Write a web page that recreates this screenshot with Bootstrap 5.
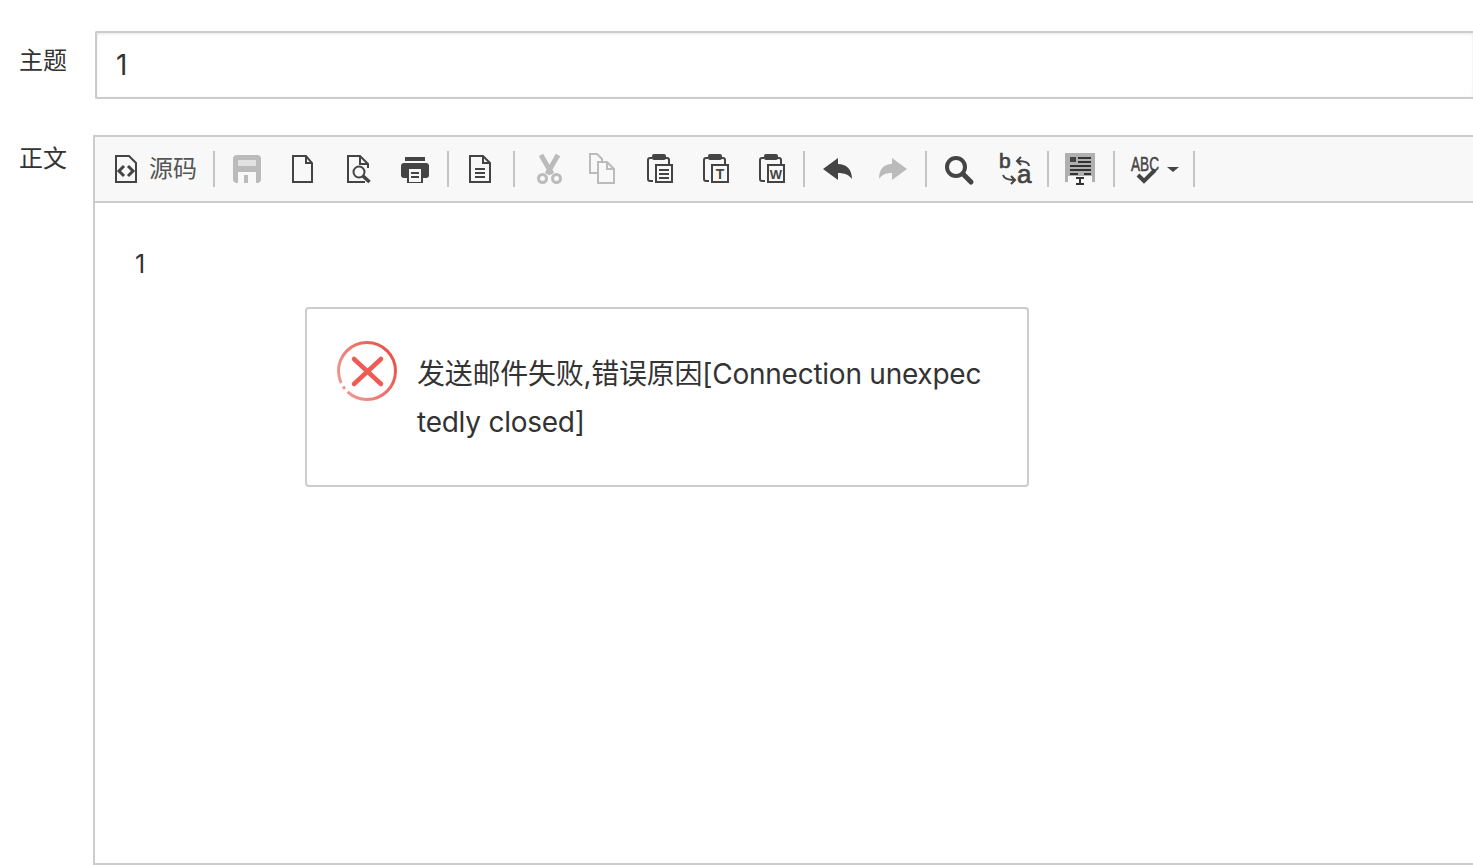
<!DOCTYPE html>
<html lang="zh">
<head>
<meta charset="utf-8">
<title>发送邮件</title>
<link href="https://cdn.jsdelivr.net/npm/bootstrap@5.3.0/dist/css/bootstrap.min.css" rel="stylesheet">
<style>
html,body{height:865px;overflow:hidden;background:#fff}
body{font-family:Inter,"Noto Sans CJK SC",sans-serif;color:#333;padding:31px 0 0 19px;position:relative}
.subj-row{height:68px;margin-bottom:36px}
.field-label{font-size:24px;line-height:34px;color:#333;margin:0;flex:none}
.subj-label{width:76px;padding-top:13px}
.body-label{width:74px;padding-top:7px}
.subj-input.form-control{height:68px;border:2px solid #ccc;border-right:0;border-radius:2px 0 0 2px;box-shadow:inset 0 1px 3px rgba(0,0,0,.1);padding:0 19px;font-size:28px;color:#333;font-family:Inter,sans-serif}
.editor-box{height:730px;border:2px solid #ccc;border-right:0;min-width:0}
.tool-strip{height:66px;background:#f8f8f8;border-bottom:2px solid #ccc;padding-left:2px;flex:none}
.tool-btn{width:56px;height:64px;padding:0;display:flex;align-items:center;justify-content:center;border:0;border-radius:0;flex:none}
.tool-btn svg{width:32px;height:32px;display:block;overflow:visible}
.src-btn{width:112px;padding-left:12px;justify-content:flex-start;color:#555;font-size:24px}
.src-btn span{margin-left:8px;white-space:nowrap;color:#555}
.spell-btn{width:70px;padding-left:10px;justify-content:flex-start}
.drop-caret{width:0;height:0;border-left:6px solid transparent;border-right:6px solid transparent;border-top:5px solid #444;margin-left:6px}
.tool-sep{width:2px;height:36px;background:#c4c4c4;margin:0 4px;flex:none}
.ink{stroke:#444;fill:none;stroke-width:2}
.ink-fill{fill:#444}
.off{stroke:#bbb;fill:none;stroke-width:2}
.off-fill{fill:#bbb}
.ico-text{font-family:"Liberation Sans",sans-serif;fill:#444}
.edit-area{flex:1;padding:42px 40px;font-size:25px;line-height:38px;color:#333;font-family:Inter,sans-serif}
.fail-box{position:absolute;left:305px;top:307px;width:724px;height:180px;background:#fff;border:2px solid #ccc;border-radius:4px;padding:41px 44px 0 110px;font-size:28px;line-height:48px;letter-spacing:-.25px;color:#333;word-break:break-all}
.fail-ico{position:absolute;left:30px;top:32px;width:60px;height:60px;overflow:visible;filter:blur(.3px)}
</style>
</head>
<body>
<div class="d-flex subj-row">
  <label class="field-label subj-label" for="subj">主题</label>
  <input id="subj" class="form-control subj-input" type="text" value="1">
</div>
<div class="d-flex">
  <div class="field-label body-label">正文</div>
  <div class="editor-box flex-grow-1 d-flex flex-column">
    <div class="tool-strip d-flex align-items-center" role="toolbar">
      <button type="button" class="btn tool-btn src-btn">
        <svg viewBox="0 0 32 32"><path class="ink" d="M7 3h13l7 7v19H7z"/><path d="M15 13l-5 5 5 5M19 13l5 5-5 5" stroke="#444" stroke-width="3" fill="none"/></svg>
        <span>源码</span>
      </button>
      <div class="tool-sep"></div>
      <button type="button" class="btn tool-btn"><svg viewBox="0 0 32 32"><rect class="off-fill" x="2" y="2" width="28" height="28" rx="4"/><rect x="7" y="7" width="18" height="6" fill="#e2e2e2"/><path d="M7 19h18v11H7z" fill="#f8f8f8"/><rect class="off-fill" x="13" y="22" width="4" height="8"/></svg></button>
      <button type="button" class="btn tool-btn"><svg viewBox="0 0 32 32"><path class="ink" d="M6 3h13l6 7v19H6zM19 3v7h6"/></svg></button>
      <button type="button" class="btn tool-btn"><svg viewBox="0 0 32 32"><path class="ink" d="M22 29H5V3h12l8 8v4M17 3v8h8"/><circle cx="16" cy="19" r="5.500" fill="#f8f8f8" stroke="#444" stroke-width="2"/><path d="M20 23l6.500 6" stroke="#444" stroke-width="3.500"/></svg></button>
      <button type="button" class="btn tool-btn"><svg viewBox="0 0 32 32"><path class="ink-fill" d="M6 4h20v4H6zM5 10h22a3 3 0 0 1 3 3v9a3 3 0 0 1-3 3h-3v5H8v-5H5a3 3 0 0 1-3-3v-9a3 3 0 0 1 3-3z"/><path d="M10 16h12v13H10z" fill="#f8f8f8"/><path d="M12 20h8M12 24h8" stroke="#444" stroke-width="2"/></svg></button>
      <div class="tool-sep"></div>
      <button type="button" class="btn tool-btn"><svg viewBox="0 0 32 32"><path class="ink" d="M5 3h13l7 7v19H5zM18 3v7h7M10 16h10M10 20h10M10 24h10"/></svg></button>
      <div class="tool-sep"></div>
      <button type="button" class="btn tool-btn"><svg viewBox="0 0 32 32"><path d="M10 2l11 19M27 2L16 21" stroke="#bbb" stroke-width="5" fill="none"/><circle cx="11.500" cy="25.500" r="4" fill="none" stroke="#bbb" stroke-width="3"/><circle cx="25.500" cy="25.500" r="4" fill="none" stroke="#bbb" stroke-width="3"/></svg></button>
      <button type="button" class="btn tool-btn"><svg viewBox="0 0 32 32"><path class="off" d="M10 20H3V1h7l5 5v3M11 9h9l7 7v14H11zM20 9v7h7"/></svg></button>
      <button type="button" class="btn tool-btn"><svg viewBox="0 0 32 32"><path class="ink" d="M9 5H7a2 2 0 0 0-2 2v19a2 2 0 0 0 2 2h3M22 5h2a2 2 0 0 1 2 2v4"/><rect class="ink-fill" x="9" y="1" width="14" height="6" rx="2"/><rect class="ink" x="13" y="12" width="16" height="17"/><path class="ink" d="M16 17h10M16 21h10M16 25h10"/></svg></button>
      <button type="button" class="btn tool-btn"><svg viewBox="0 0 32 32"><path class="ink" d="M9 5H7a2 2 0 0 0-2 2v19a2 2 0 0 0 2 2h3M22 5h2a2 2 0 0 1 2 2v4"/><rect class="ink-fill" x="9" y="1" width="14" height="6" rx="2"/><rect class="ink" x="13" y="12" width="16" height="17"/><text class="ico-text" x="21" y="26" font-size="14" font-weight="700" text-anchor="middle">T</text></svg></button>
      <button type="button" class="btn tool-btn"><svg viewBox="0 0 32 32"><path class="ink" d="M9 5H7a2 2 0 0 0-2 2v19a2 2 0 0 0 2 2h3M22 5h2a2 2 0 0 1 2 2v4"/><rect class="ink-fill" x="9" y="1" width="14" height="6" rx="2"/><rect class="ink" x="13" y="12" width="16" height="17"/><text class="ico-text" x="21" y="26" font-size="13" font-weight="700" text-anchor="middle">W</text></svg></button>
      <div class="tool-sep"></div>
      <button type="button" class="btn tool-btn"><svg viewBox="0 0 32 32"><path class="ink-fill" d="M2 16L17 5v6c8 0 14 5 14 15-3-4-7-6-14-6v7z"/></svg></button>
      <button type="button" class="btn tool-btn"><svg viewBox="0 0 32 32"><path class="off-fill" d="M30 16L15 5v6C7 11 2 16 2 26c3-4 6-6 13-6v7z"/></svg></button>
      <div class="tool-sep"></div>
      <button type="button" class="btn tool-btn"><svg viewBox="0 0 32 32"><circle cx="13" cy="14" r="9" fill="none" stroke="#444" stroke-width="4"/><path d="M20 21l8 8" stroke="#444" stroke-width="5" stroke-linecap="round"/></svg></button>
      <button type="button" class="btn tool-btn"><svg viewBox="0 0 32 32"><text class="ico-text" x="0" y="15" font-size="21" stroke="#444" stroke-width=".7">b</text><text class="ico-text" x="18" y="30" font-size="26" stroke="#444" stroke-width=".7">a</text><path class="ink" d="M30 13c0-3-4-5-11-5M22 4l-4 4 4 4M4 22c1 3 5 5 11 5M12 23l4 4-4 4"/></svg></button>
      <div class="tool-sep"></div>
      <button type="button" class="btn tool-btn"><svg viewBox="0 0 32 32"><rect x="0" y="0" width="30" height="29" fill="#b0b0b0"/><rect class="ink-fill" x="5" y="4" width="6" height="5"/><path d="M13 5h13M13 9h13M5 13h21M5 17h21M5 21h8M19 21h7" stroke="#333" stroke-width="2"/><rect x="3" y="23" width="24" height="9" fill="#f8f8f8"/><path d="M11 25h8M11 31h8M15 25v6" stroke="#333" stroke-width="2"/></svg></button>
      <div class="tool-sep"></div>
      <button type="button" class="btn tool-btn spell-btn"><svg viewBox="0 0 32 32"><text class="ico-text" x="16" y="18" font-size="20" font-weight="400" stroke="#444" stroke-width=".5" text-anchor="middle" textLength="28" lengthAdjust="spacingAndGlyphs">ABC</text><path d="M9 22l6 6 11-11" stroke="#444" stroke-width="4" fill="none"/></svg><i class="drop-caret"></i></button>
      <div class="tool-sep"></div>
    </div>
    <div class="edit-area">1</div>
  </div>
</div>
<div class="fail-box">
  <svg class="fail-ico" viewBox="0 0 60 60"><defs><linearGradient id="ringfade" x1="1" y1="0" x2="0" y2="0.600"><stop offset="0" stop-color="#e8483e"/><stop offset="1" stop-color="#f09690"/></linearGradient></defs><circle cx="30" cy="30" r="28.500" fill="none" stroke="url(#ringfade)" stroke-width="3" stroke-dasharray="66 4 3 4 103"/><path d="M17 18l27 25M44 18L17 43" stroke="#ee5b52" stroke-width="4.500" stroke-linecap="round"/></svg>
  发送邮件失败,错误原因[Connection unexpectedly closed]
</div>
<script src="https://cdn.jsdelivr.net/npm/bootstrap@5.3.0/dist/js/bootstrap.bundle.min.js"></script>
</body>
</html>
